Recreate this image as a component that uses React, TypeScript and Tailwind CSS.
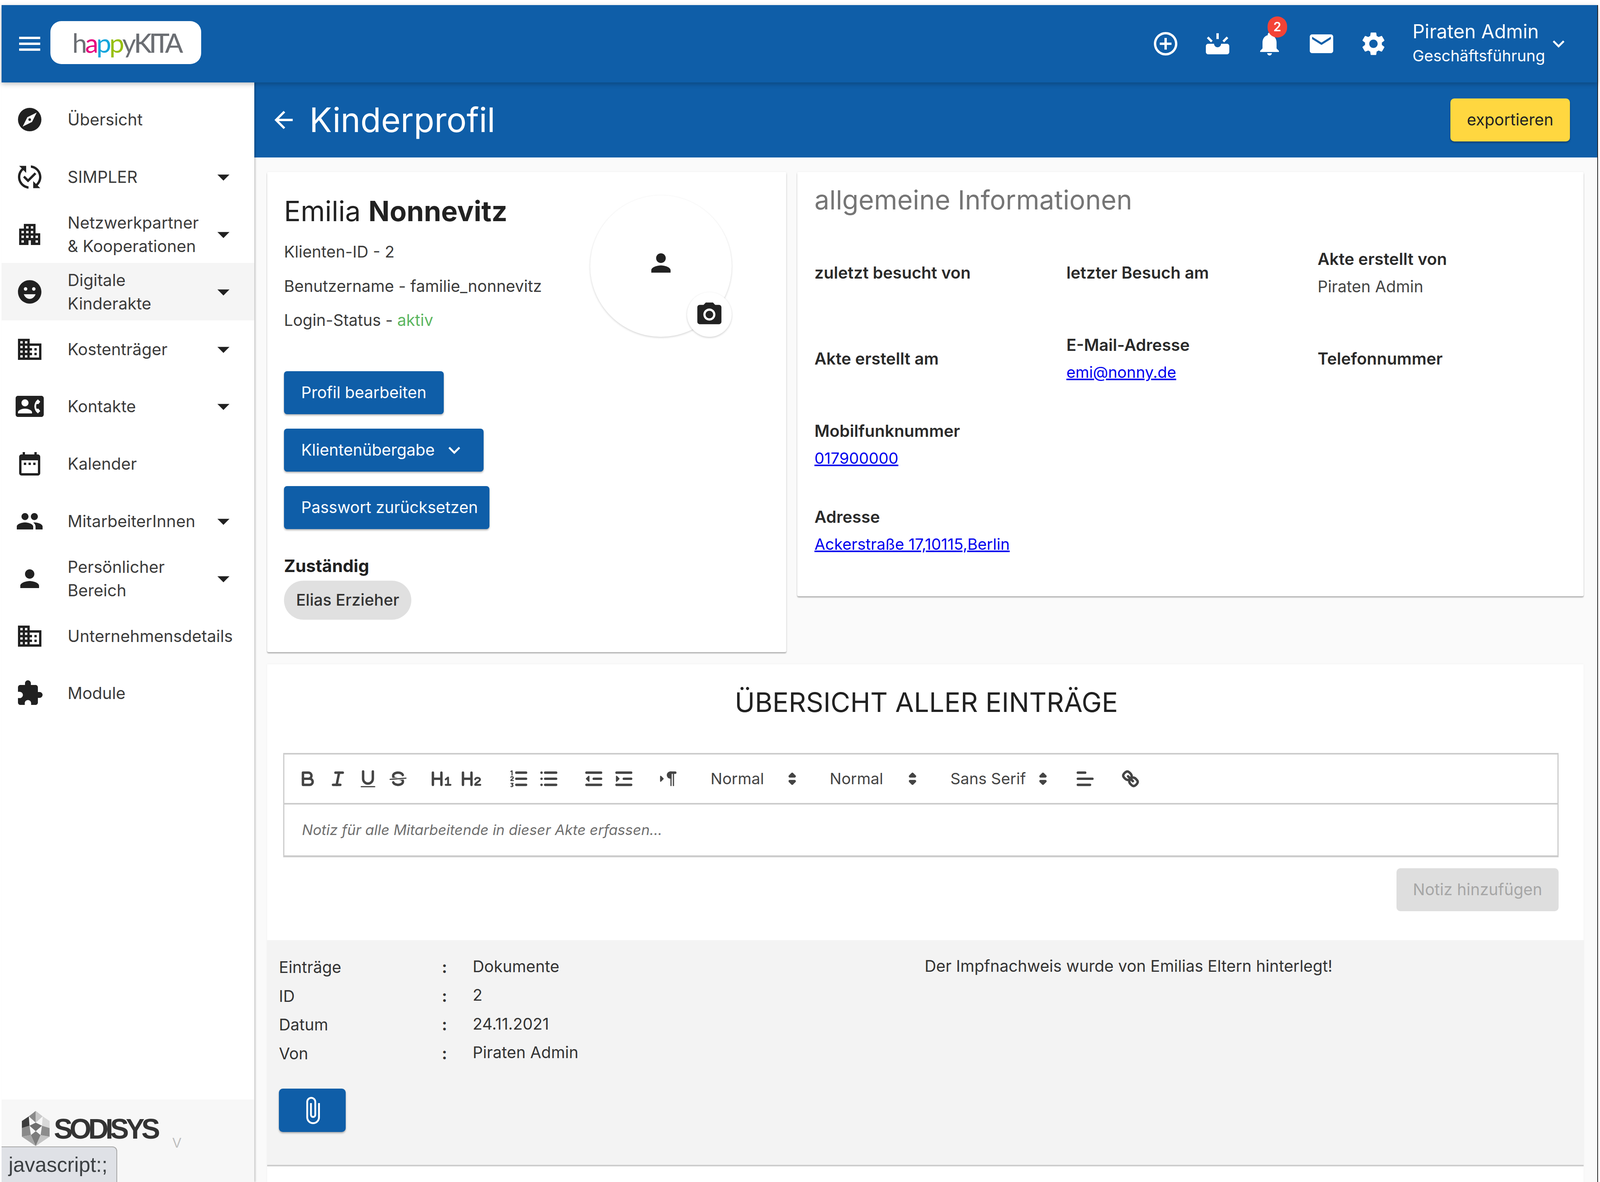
import React from 'react';
import {
  MdMenu, MdControlPoint, MdUpcoming, MdNotifications, MdEmail, MdSettings, MdKeyboardArrowDown,
  MdArrowDropDown, MdPublishedWithChanges, MdApartment, MdEmojiEmotions, MdDomain, MdContactPhone,
  MdDateRange, MdPeople, MdPerson, MdExtension, MdArrowBack, MdCameraAlt, MdAttachFile,
} from 'react-icons/md';

function CompassIcon({ className }: { className?: string }) {
  return (
    <svg viewBox="0 0 24 24" className={className}>
      <circle cx="12" cy="12" r="10" fill="#212121" />
      <path d="M18 6 L14 14 L6 18 L10 10 Z" fill="#fff" />
      <circle cx="12" cy="12" r="1.1" fill="#212121" />
    </svg>
  );
}

const navItems = [
  { icon: CompassIcon, label: 'Übersicht' },
  { icon: MdPublishedWithChanges, label: 'SIMPLER', caret: true },
  { icon: MdApartment, label: 'Netzwerkpartner\n& Kooperationen', caret: true },
  { icon: MdEmojiEmotions, label: 'Digitale\nKinderakte', caret: true, active: true },
  { icon: MdDomain, label: 'Kostenträger', caret: true },
  { icon: MdContactPhone, label: 'Kontakte', caret: true },
  { icon: MdDateRange, label: 'Kalender' },
  { icon: MdPeople, label: 'MitarbeiterInnen', caret: true },
  { icon: MdPerson, label: 'Persönlicher\nBereich', caret: true },
  { icon: MdDomain, label: 'Unternehmensdetails' },
  { icon: MdExtension, label: 'Module' },
];

function Sidebar() {
  return (
    <aside className="relative z-10 flex w-[647px] shrink-0 flex-col justify-between bg-white shadow-[3px_0_4px_rgba(0,0,0,0.2)]">
      <nav className="pt-[22px]">
        {navItems.map((item) => (
          <div
            key={item.label}
            className={`flex h-[146.8px] items-center pl-[35px] pr-[42px] ${item.active ? 'bg-[#f5f5f5]' : ''}`}
          >
            <div className="mr-[60px] flex w-[74px] shrink-0 justify-center text-[#212121]">
              <item.icon className="h-[72px] w-[72px]" />
            </div>
            <span className="flex-1 whitespace-pre-line text-[42px] leading-[60px] text-[#3b3b3b]">
              {item.label}
            </span>
            {item.caret && <MdArrowDropDown className="h-[74px] w-[74px] shrink-0 text-[#212121]" />}
          </div>
        ))}
      </nav>
      <div className="relative h-[211px] bg-[#f7f7f7]">
        <div className="flex items-start pl-[52px] pt-[29px]">
          <svg viewBox="0 0 80 90" className="h-[90px] w-[71px] shrink-0" preserveAspectRatio="none">
            <polygon points="40,0 20,14 40,30" fill="#8a8a8a" />
            <polygon points="40,0 60,14 40,30" fill="#c9c9c9" />
            <polygon points="20,14 0,26 0,44 22,38" fill="#3d3d3d" />
            <polygon points="60,14 80,26 80,44 58,38" fill="#d8d8d8" />
            <polygon points="40,30 22,38 40,52 58,38" fill="#6f6f6f" />
            <polygon points="0,44 22,38 26,62 0,66" fill="#8a8a8a" />
            <polygon points="80,44 58,38 54,62 80,66" fill="#8c8c8c" />
            <polygon points="40,52 26,62 40,90 54,62" fill="#7d7d7d" />
            <polygon points="0,66 26,62 40,90" fill="#a8a8a8" />
            <polygon points="80,66 54,62 40,90" fill="#c4c4c4" />
          </svg>
          <span className="ml-[11px] mt-[6px] font-['Liberation_Sans',sans-serif] text-[72px] font-bold leading-[80px] tracking-[-8px] text-[#333]">
            SODISYS
          </span>
          <span className="ml-[38px] mt-[52px] text-[46px] font-light leading-[50px] text-[#bdbdbd]">v</span>
        </div>
        <div className="absolute bottom-0 left-0 flex h-[91px] w-[296px] items-center rounded-tr-[12px] border-t-[2px] border-r-[2px] border-[#a5a5a5] bg-[#dfe1e6] pl-[18px] font-['Liberation_Sans',sans-serif] text-[53px] text-[#3c4043]">
          javascript:;
        </div>
      </div>
    </aside>
  );
}

function Header() {
  return (
    <header className="relative z-20 flex h-[198px] items-center bg-[#0f5ea8] pl-[35px] pr-[69px] shadow-[0_4px_12px_rgba(0,0,0,0.25)]">
      <div className="mr-[16px] flex w-[74px] justify-center">
        <MdMenu className="h-[72px] w-[72px] text-white" />
      </div>
      <div className="mb-[6px] flex h-[110px] w-[386px] items-center rounded-[28px] bg-white pl-[56px] font-[Lato,sans-serif] text-[68px] leading-[80px] tracking-[-5px] text-[#6b6e73]">
        <span>h</span>
        <span className="text-[#e6007e]">a</span>
        <span className="text-[#12a5dc]">p</span>
        <span className="text-[#97bf0d]">p</span>
        <span>y</span>
        <span className="font-medium tracking-[-7px]">KITA</span>
      </div>
      <div className="ml-auto flex items-center text-white">
        <div className="flex w-[133px] justify-center"><MdControlPoint className="h-[72px] w-[72px]" /></div>
        <div className="flex w-[133px] justify-center"><MdUpcoming className="h-[72px] w-[72px]" /></div>
        <div className="relative flex w-[133px] justify-center">
          <MdNotifications className="h-[72px] w-[72px]" />
          <span className="absolute left-[62px] top-[-34px] flex h-[54px] w-[50px] items-center justify-center rounded-full bg-[#f44336] text-[32px] font-semibold">
            2
          </span>
        </div>
        <div className="flex w-[133px] justify-center"><MdEmail className="h-[72px] w-[72px]" /></div>
        <div className="flex w-[133px] justify-center"><MdSettings className="h-[72px] w-[72px]" /></div>
        <div className="ml-[34px] w-[344px] whitespace-nowrap">
          <div className="text-[49px] leading-[62px]">Piraten Admin</div>
          <div className="text-[40px] leading-[62px]">Geschäftsführung</div>
        </div>
        <MdKeyboardArrowDown className="h-[60px] w-[60px]" />
      </div>
    </header>
  );
}

function BlueButton({ children, width }: { children: React.ReactNode; width: string }) {
  return (
    <button className={`flex h-[110px] items-center rounded-[8px] bg-[#0f5ea8] pl-[44px] text-[41px] text-white shadow-[0_3px_4px_rgba(0,0,0,0.3)] ${width}`}>
      {children}
    </button>
  );
}

function ProfileCard() {
  return (
    <section className="h-[1229px] w-[1329px] shrink-0 rounded-[4px] bg-white pl-[43px] pt-[60px] shadow-[0_3px_3px_rgba(0,0,0,0.3),0_0_4px_rgba(0,0,0,0.06)]">
      <div className="flex items-start">
        <div className="w-[784px]">
          <h1 className="text-[71px] leading-[80px] text-[#212121]">
            Emilia <b className="font-bold">Nonnevitz</b>
          </h1>
          <p className="mt-[21px] text-[41px] leading-[87.5px] text-[#3b3b3b]">Klienten-ID - 2</p>
          <p className="text-[41px] leading-[87.5px] text-[#3b3b3b]">Benutzername - familie_nonnevitz</p>
          <p className="text-[41px] leading-[87.5px] text-[#3b3b3b]">
            Login-Status - <span className="text-[#5cb660]">aktiv</span>
          </p>
        </div>
        <div className="relative h-[362px] w-[362px] rounded-full shadow-[0_2px_5px_rgba(0,0,0,0.18)]">
          <MdPerson className="absolute left-[144px] top-[136px] h-[74px] w-[74px] text-[#212121]" />
          <div className="absolute bottom-0 right-0 flex h-[114px] w-[114px] items-center justify-center rounded-full bg-white shadow-[0_2px_5px_rgba(0,0,0,0.2)]">
            <MdCameraAlt className="h-[74px] w-[74px] text-[#212121]" />
          </div>
        </div>
      </div>
      <div className="mt-[86px] flex flex-col items-start gap-[37px]">
        <BlueButton width="w-[409px]">Profil bearbeiten</BlueButton>
        <BlueButton width="w-[511px]">
          Klientenübergabe
          <MdKeyboardArrowDown className="ml-[20px] h-[60px] w-[60px]" />
        </BlueButton>
        <BlueButton width="w-[526px]">Passwort zurücksetzen</BlueButton>
      </div>
      <div className="mt-[66px] text-[44px] font-bold leading-[56px] text-[#212121]">Zuständig</div>
      <div className="mt-[10px] flex h-[100px] w-[326px] items-center justify-center rounded-full bg-[#e0e0e0] text-[41px] font-medium text-[#333]">
        Elias Erzieher
      </div>
    </section>
  );
}

function InfoCell({ label, value, href }: { label: string; value?: string; href?: boolean }) {
  return (
    <div className="flex h-[220px] flex-col justify-center text-[41px] leading-[70px]">
      <div className="text-[42px] font-semibold text-[#2a2a2a]">{label}</div>
      {value && (href ? <a className="text-[40px] text-[#0000ee] underline">{value}</a> : <div className="text-[#444]">{value}</div>)}
    </div>
  );
}

function InfoCard() {
  return (
    <section className="h-[1086px] flex-1 rounded-[4px] bg-white pl-[44px] pt-[30px] shadow-[0_3px_3px_rgba(0,0,0,0.3),0_0_4px_rgba(0,0,0,0.06)]">
      <h2 className="text-[68px] leading-[82px] text-[#757575]">allgemeine Informationen</h2>
      <div className="mt-[36px] grid grid-cols-[645px_643px_1fr]">
        <InfoCell label="zuletzt besucht von" />
        <InfoCell label="letzter Besuch am" />
        <InfoCell label="Akte erstellt von" value="Piraten Admin" />
        <InfoCell label="Akte erstellt am" />
        <InfoCell label="E-Mail-Adresse" value="emi@nonny.de" href />
        <InfoCell label="Telefonnummer" />
        <InfoCell label="Mobilfunknummer" value="017900000" href />
        <div />
        <div />
        <InfoCell label="Adresse" value="Ackerstraße 17,10115,Berlin" href />
      </div>
    </section>
  );
}

function QuillIcon({ children }: { children: React.ReactNode }) {
  return (
    <svg
      viewBox="0 0 18 18"
      className="h-[56px] w-[56px]"
      fill="none"
      stroke="#444"
      strokeWidth="2"
      strokeLinecap="round"
      strokeLinejoin="round"
    >
      {children}
    </svg>
  );
}

const toolbarIcons = [
  { gap: 0, el: <><path d="M5,4H9.5A2.5,2.5,0,0,1,12,6.5v0A2.5,2.5,0,0,1,9.5,9H5V4Z" /><path d="M5,9h5.5A2.5,2.5,0,0,1,13,11.5v0A2.5,2.5,0,0,1,10.5,14H5V9Z" /></> },
  { gap: 0, el: <><line x1="7" x2="13" y1="4" y2="4" /><line x1="5" x2="11" y1="14" y2="14" /><line x1="8" x2="10" y1="14" y2="4" /></> },
  { gap: 0, el: <><path d="M5,3V9a4,4,0,0,0,4,4H9a4,4,0,0,0,4-4V3" /><rect x="3" y="15" width="12" height="1" rx=".5" fill="#444" stroke="none" /></> },
  { gap: 0, el: <><line x1="15.5" x2="2.5" y1="8.5" y2="9.5" strokeWidth="1" /><path stroke="none" fill="#444" d="M9.007,8C6.542,7.791,6,7.519,6,6.5,6,5.792,7.283,5,9,5c1.571,0,2.765.679,2.969,1.309a1,1,0,0,0,1.9-.617C13.356,4.106,11.354,3,9,3,6.2,3,4,4.538,4,6.5a3.2,3.2,0,0,0,.5,1.843Z" /><path stroke="none" fill="#444" d="M8.984,10C11.457,10.208,12,10.479,12,11.5c0,.708-1.283,1.5-3,1.5-1.571,0-2.765-.679-2.969-1.309a1,1,0,1,0-1.9.617C4.644,13.894,6.646,15,9,15c2.8,0,5-1.538,5-3.5a3.2,3.2,0,0,0-.5-1.843Z" /></> },
  { gap: 34, el: <><path d="M2,4V14M9,4V14M2,9H9" /><path d="M12.5,9.5 14.5,8V14M12.5,14H16.5" strokeWidth="1.5" /></> },
  { gap: 0, el: <><path d="M2,4V14M9,4V14M2,9H9" /><path d="M12,9.5C12.5,7.8 15.8,7.8 16,9.6C16,11.4 12.2,12 12,14H16.3" strokeWidth="1.5" /></> },
  { gap: 44, el: <><line x1="7" x2="15" y1="4" y2="4" /><line x1="7" x2="15" y1="9" y2="9" /><line x1="7" x2="15" y1="14" y2="14" /><path d="M2.5,3 3.5,2.5V6M2.5,7.8C3,7 4.5,7.2 4.5,8.2C4.5,9 2.5,9.6 2.5,10.5H4.6M2.6,12.8H4.3L3.4,14C4.6,14 4.6,15.8 2.6,15.4" strokeWidth="0.9" /></> },
  { gap: 0, el: <><line x1="6" x2="15" y1="4" y2="4" /><line x1="6" x2="15" y1="9" y2="9" /><line x1="6" x2="15" y1="14" y2="14" /><line x1="3" x2="3" y1="4" y2="4" /><line x1="3" x2="3" y1="9" y2="9" /><line x1="3" x2="3" y1="14" y2="14" /></> },
  { gap: 38, el: <><line x1="3" x2="15" y1="14" y2="14" /><line x1="3" x2="15" y1="4" y2="4" /><line x1="9" x2="15" y1="9" y2="9" /><polygon points="5 7 5 11 3 9 5 7" fill="#444" strokeWidth="1" /></> },
  { gap: 0, el: <><line x1="3" x2="15" y1="14" y2="14" /><line x1="3" x2="15" y1="4" y2="4" /><line x1="9" x2="15" y1="9" y2="9" /><polygon points="3 7 3 11 5 9 3 7" fill="#444" strokeWidth="1" /></> },
  { gap: 36, el: <><polygon points="3 11 5 9 3 7 3 11" fill="#444" strokeWidth="1" /><line x1="15" x2="11" y1="4" y2="4" /><path stroke="none" fill="#444" d="M11,3a3,3,0,0,0,0,6h1V3H11Z" /><rect stroke="none" fill="#444" x="11" y="4" width="1" height="11" /><rect stroke="none" fill="#444" x="13" y="4" width="1" height="11" /></> },
];

function Picker({ label, width, ml }: { label: string; width: string; ml: string }) {
  return (
    <div className={`flex items-center justify-between text-[40px] text-[#444] ${width} ${ml}`}>
      <span>{label}</span>
      <svg viewBox="0 0 18 18" className="h-[56px] w-[56px]" fill="#444" stroke="#444" strokeWidth="2" strokeLinejoin="round">
        <polygon points="7 11 9 13 11 11 7 11" />
        <polygon points="7 7 9 5 11 7 7 7" />
      </svg>
    </div>
  );
}

function Editor() {
  return (
    <div className="border-x-[3px] border-t-[4px] border-b-[5px] border-[#ccc]">
      <div className="flex h-[128px] items-center border-b-[4px] border-[#ccc] pl-[21px]">
        {toolbarIcons.map((icon, i) => (
          <div key={i} className="flex w-[77px] justify-center" style={{ marginLeft: icon.gap }}>
            <QuillIcon>{icon.el}</QuillIcon>
          </div>
        ))}
        <Picker label="Normal" width="w-[237px]" ml="ml-[71px]" />
        <Picker label="Normal" width="w-[240px]" ml="ml-[68px]" />
        <Picker label="Sans Serif" width="w-[265px]" ml="ml-[69px]" />
        <div className="ml-[41px] flex w-[77px] justify-center">
          <QuillIcon>
            <line x1="3" x2="15" y1="9" y2="9" /><line x1="3" x2="13" y1="14" y2="14" /><line x1="3" x2="9" y1="4" y2="4" />
          </QuillIcon>
        </div>
        <div className="ml-[39px] flex w-[77px] justify-center">
          <QuillIcon>
            <line x1="7" x2="11" y1="7" y2="11" />
            <path d="M8.9,4.577a3.476,3.476,0,0,1,.36,4.679A3.476,3.476,0,0,1,4.577,8.9C3.185,7.5,2.035,6.4,4.217,4.217S7.5,3.185,8.9,4.577Z" />
            <path d="M13.423,9.1a3.476,3.476,0,0,0-4.679-.36,3.476,3.476,0,0,0,.36,4.679c1.392,1.392,2.5,2.542,4.679.36S14.815,10.5,13.423,9.1Z" />
          </QuillIcon>
        </div>
      </div>
      <div className="flex h-[130px] items-center pl-[45px] text-[37px] italic text-[#6f6f6f]">
        Notiz für alle Mitarbeitende in dieser Akte erfassen...
      </div>
    </div>
  );
}

const entryRows = [
  ['Einträge', 'Dokumente'],
  ['ID', '2'],
  ['Datum', '24.11.2021'],
  ['Von', 'Piraten Admin'],
];

function Overview() {
  return (
    <section className="mt-[31px] flex-1 bg-white shadow-[0_0_4px_rgba(0,0,0,0.06)]">
      <div className="h-[706px] pl-[41px] pr-[64px]">
        <h2 className="flex h-[227px] items-center justify-center pb-[31px] pl-[28px] text-[69px] text-[#212121]">ÜBERSICHT ALLER EINTRÄGE</h2>
        <Editor />
        <div className="mt-[28px] flex justify-end">
          <div className="flex h-[110px] w-[415px] items-center justify-center rounded-[10px] bg-[#dedede] text-[41px] text-[#a6a6a6]">
            Notiz hinzufügen
          </div>
        </div>
      </div>
      <div className="h-[579px] border-b-[4px] border-[#cdcdcd] bg-[#f3f3f3] pl-[30px] pt-[33px]">
        <div className="flex text-[41px] text-[#333]">
          <div className="w-[1653px]">
            {entryRows.map(([label, value]) => (
              <div key={label} className="flex h-[73.6px] items-center">
                <span className="w-[417px]">{label}</span>
                <span className="w-[79px] font-bold">:</span>
                <span className="-mt-[5px]">{value}</span>
              </div>
            ))}
          </div>
          <div className="-mt-[3px] leading-[73.6px]">Der Impfnachweis wurde von Emilias Eltern hinterlegt!</div>
        </div>
        <button className="mt-[53px] flex h-[111px] w-[171px] items-center justify-center rounded-[10px] bg-[#0f5ea8] text-white shadow-[0_3px_4px_rgba(0,0,0,0.3)]">
          <MdAttachFile className="h-[76px] w-[76px]" />
        </button>
      </div>
    </section>
  );
}

export default function App() {
  return (
    <div className="h-[3025px] w-full overflow-hidden bg-white pl-[4px] pr-[5px] pt-[13px] font-[Inter,sans-serif]">
      <div className="h-[3012px] border-r-[2px] border-[#222]">
        <Header />
        <div className="flex h-[2814px]">
          <Sidebar />
          <main className="flex min-w-0 flex-1 flex-col bg-[#fafafa]">
            <div className="flex h-[192px] shrink-0 items-center bg-[#0f5ea8] pl-[40px] pr-[70px] text-white">
              <MdArrowBack className="h-[70px] w-[70px]" />
              <h1 className="ml-[31px] text-[86px] leading-none">Kinderprofil</h1>
              <button className="ml-auto flex h-[110px] w-[306px] items-center justify-center rounded-[10px] bg-[#ffd740] text-[41px] text-[#222] shadow-[0_3px_4px_rgba(0,0,0,0.35)]">
                exportieren
              </button>
            </div>
            <div className="flex flex-1 flex-col pl-[33px] pr-[35px] pt-[37px]">
              <div className="flex items-start gap-[28px]">
                <ProfileCard />
                <InfoCard />
              </div>
              <Overview />
            </div>
          </main>
        </div>
      </div>
    </div>
  );
}
